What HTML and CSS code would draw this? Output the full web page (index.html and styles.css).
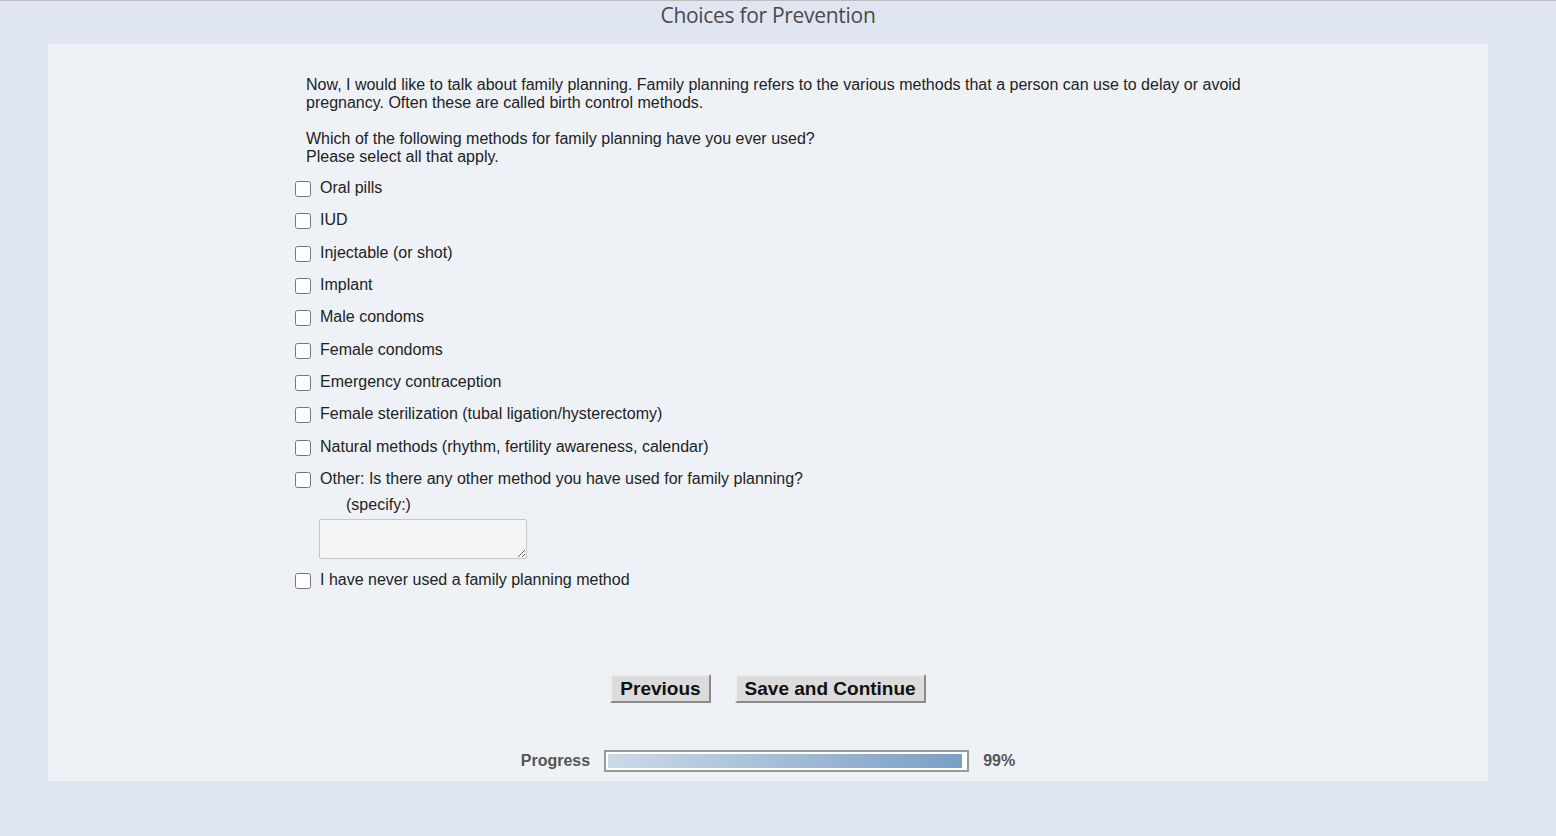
FILE: index.html
```html
<!DOCTYPE html>
<html lang="en">
<head>
    <meta charset="UTF-8">
    <meta name="viewport" content="width=device-width, initial-scale=1.0">
    <title>Choices for Prevention</title>
    <link rel="stylesheet" href="styles.css">
</head>
<body>
    <header class="top">
        <h1 class="title">Choices for Prevention</h1>
    </header>

    <!-- Survey page: family planning question -->
    <main class="panel">
        <form class="question">
            <p class="intro">Now, I would like to talk about family planning. Family planning refers to the various methods that a person can use to delay or avoid pregnancy. Often these are called birth control methods.</p>

            <p class="intro">Which of the following methods for family planning have you ever used?<br>Please select all that apply.</p>

            <ul class="choices">
                <li class="choice"><input type="checkbox" id="c1"><label for="c1">Oral pills</label></li>
                <li class="choice"><input type="checkbox" id="c2"><label for="c2">IUD</label></li>
                <li class="choice"><input type="checkbox" id="c3"><label for="c3">Injectable (or shot)</label></li>
                <li class="choice"><input type="checkbox" id="c4"><label for="c4">Implant</label></li>
                <li class="choice"><input type="checkbox" id="c5"><label for="c5">Male condoms</label></li>
                <li class="choice"><input type="checkbox" id="c6"><label for="c6">Female condoms</label></li>
                <li class="choice"><input type="checkbox" id="c7"><label for="c7">Emergency contraception</label></li>
                <li class="choice"><input type="checkbox" id="c8"><label for="c8">Female sterilization (tubal ligation/hysterectomy)</label></li>
                <li class="choice"><input type="checkbox" id="c9"><label for="c9">Natural methods (rhythm, fertility awareness, calendar)</label></li>
                <li class="choice"><input type="checkbox" id="c10"><label for="c10">Other: Is there any other method you have used for family planning?</label></li>
                <li class="specify">
                    <div class="specify-label">(specify:)</div>
                    <textarea class="specify-box"></textarea>
                </li>
                <li class="choice"><input type="checkbox" id="c11"><label for="c11">I have never used a family planning method</label></li>
            </ul>

            <div class="nav">
                <button type="button" class="btn">Previous</button>
                <button type="button" class="btn">Save and Continue</button>
            </div>

            <div class="progress">
                <span class="progress-label">Progress</span>
                <div class="progress-bar"><div class="progress-fill" style="width: 99%"></div></div>
                <span class="progress-label">99%</span>
            </div>
        </form>
    </main>
</body>
</html>
```

FILE: styles.css
```css
html {
    background-color: #dfe6f2;
    border-top: 1px solid #bcbcbc;
}

body {
    margin: 0;
    width: 1536px;
    min-height: 835px;
    font-family: "Liberation Sans", Arial, sans-serif;
    font-size: 16px;
    color: #222;
}

.top {
    height: 43px;
}

.title {
    margin: 0;
    text-align: center;
    font-family: "Open Sans", "DejaVu Sans", sans-serif;
    font-weight: normal;
    font-size: 21px;
    line-height: 28px;
    color: #4a4a4a;
    letter-spacing: -0.3px;
}

.panel {
    margin: 0 48px;
    height: 737px;
    background-color: #eef2f7;
    box-sizing: border-box;
    padding-top: 32px;
}

.question {
    width: 960px;
    margin: 0 auto;
}

.intro {
    margin: 0 0 18px 18px;
    line-height: 18px;
}

.intro + .intro {
    margin-bottom: 6px;
}

.choices {
    list-style: none;
    margin: 0;
    padding: 0;
}

.choice {
    display: flex;
    align-items: center;
    height: 32.33px;
}

.choice input {
    width: 16px;
    height: 16px;
    margin: 2px 9px 0 7px;
}

.choice label {
    line-height: 18px;
}

.specify {
    padding-left: 31px;
    margin-bottom: 5px;
}

.specify-label {
    padding-left: 27px;
    line-height: 18px;
    margin-top: 1px;
}

.specify-box {
    display: block;
    margin-top: 5px;
    width: 208px;
    height: 40px;
    box-sizing: border-box;
    border: 1px solid #c6c6c6;
    border-radius: 2px;
    background-color: #f4f5f7;
    resize: both;
}

.nav {
    display: flex;
    justify-content: center;
    gap: 24px;
    margin-top: 77px;
}

.btn {
    font-family: "Liberation Sans", Arial, sans-serif;
    font-weight: bold;
    font-size: 19px;
    color: #111;
    background-color: #dcdcdc;
    border: 2px solid;
    border-color: #eeeeee #8a8a8a #8a8a8a #eeeeee;
    height: 29px;
    padding: 0 8px;
    line-height: 23px;
}

.progress {
    display: flex;
    justify-content: center;
    align-items: center;
    gap: 14px;
    margin-top: 47px;
}

.progress-label {
    font-weight: bold;
    color: #555;
}

.progress-bar {
    width: 365px;
    height: 22px;
    box-sizing: border-box;
    border: 2px solid #999;
    background-color: #fff;
    padding: 2px;
}

.progress-fill {
    height: 100%;
    background: linear-gradient(to right, #ccdae7, #7a9fc5);
}
```
